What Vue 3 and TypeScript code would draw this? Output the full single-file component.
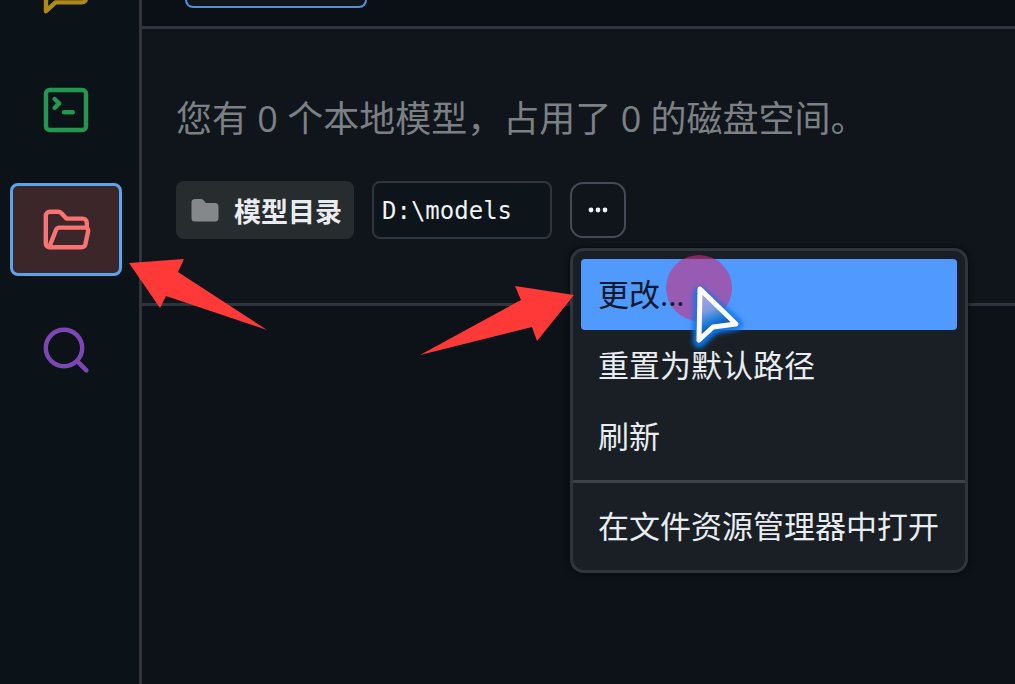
<script setup lang="ts">
import { ref } from 'vue'

const directory = ref('D:\\models')
const primary: string[] = ['更改...', '重置为默认路径', '刷新']
const highlighted = ref(0)
</script>

<template>
  <div class="app">
    <nav class="sidebar">
      <button class="side-item" type="button" aria-label="聊天">
        <svg class="side-icon" viewBox="0 0 24 24" fill="none" stroke="#b08a18">
          <path d="M22 16.200a2 2 0 0 1-2 2H6.800L2 22.600V4.500a2 2 0 0 1 2-2h16a2 2 0 0 1 2 2z" />
        </svg>
      </button>
      <button class="side-item" type="button" aria-label="终端">
        <svg class="side-icon" viewBox="0 0 24 24" fill="none" stroke="#249650">
          <rect x="2" y="2" width="20" height="20" rx="1.800" />
          <path d="M6.300 6.500l2.300 2.200-2.300 2.200M11 13.100h4.400" />
        </svg>
      </button>
      <button class="side-item active" type="button" aria-label="模型">
        <svg class="side-icon" viewBox="0 0 24 24" fill="none" stroke="#fa7373">
          <path d="M3.600 20.600A1.900 1.900 0 0 1 1.900 18.700V4.900A2 2 0 0 1 3.900 2.900h4.300a2 2 0 0 1 1.400.600l2.600 2.800h8.200a2 2 0 0 1 2 2v2.500M3.600 20.600h16.200a2 2 0 0 0 1.900-1.500l1.400-6.700a1.500 1.500 0 0 0-1.500-1.600H8.800a2 2 0 0 0-1.800 1.200L3.600 20.600z" />
        </svg>
      </button>
      <button class="side-item" type="button" aria-label="搜索">
        <svg class="side-icon" viewBox="0 0 24 24" fill="none" stroke="#7e45b4">
          <circle cx="11" cy="11" r="9.100" />
          <path d="M17.700 17.700L22.200 22.200" />
        </svg>
      </button>
    </nav>

    <main class="main">
      <header class="topbar"><div class="tab"></div></header>
      <section class="summary">
        <h1 class="title">您有 0 个本地模型，占用了 0 的磁盘空间。</h1>
        <div class="controls">
          <label class="dir-label" for="dir">
            <svg class="folder" viewBox="0 0 28 24" fill="#85888b">
              <path d="M4 1h6c1 0 1.700.300 2.300 1L15 5h9a3.500 3.500 0 0 1 3.500 3.500V20a3.500 3.500 0 0 1-3.500 3.500H4A3.500 3.500 0 0 1 .500 20V4.500A3.500 3.500 0 0 1 4 1z" />
            </svg>
            <span>模型目录</span>
          </label>
          <input id="dir" v-model="directory" class="dir-input" type="text" readonly />
          <div class="more-wrap">
            <button class="more" type="button" aria-label="更多">
              <svg class="dots" viewBox="0 0 20 6" fill="#f0f3f6">
                <circle cx="3" cy="3" r="2.400" /><circle cx="10" cy="3" r="2.400" /><circle cx="17" cy="3" r="2.400" />
              </svg>
            </button>
            <div class="menu">
              <div class="halo"></div>
              <div class="group">
                <button
                  v-for="(item, i) in primary"
                  :key="item"
                  class="menu-item"
                  :class="{ highlighted: highlighted === i }"
                  type="button"
                  @mouseenter="highlighted = i"
                ><span class="menu-text">{{ item }}</span></button>
              </div>
              <div class="group last">
                <button class="menu-item" type="button"><span class="menu-text">在文件资源管理器中打开</span></button>
              </div>
            </div>
          </div>
        </div>
      </section>
    </main>

    <svg class="arrow arrow-left" viewBox="0 0 138 72" fill="#ff3838">
      <path d="M0 4L55 0L49 13L138 71L37 37L31 49z" />
    </svg>
    <svg class="arrow arrow-right" viewBox="0 0 154 70" fill="#ff3838">
      <path d="M154 9L95 0L101 14L0 69L112 41L117 55z" />
    </svg>
    <svg class="pointer" viewBox="0 0 100 110">
      <defs>
        <linearGradient id="pointer-fill" x1="0" y1="0" x2="0.300" y2="1">
          <stop offset="0" stop-color="#b8a4dc" />
          <stop offset="0.450" stop-color="#7d9de0" />
          <stop offset="0.700" stop-color="#1677d8" />
          <stop offset="1" stop-color="#062d66" />
        </linearGradient>
        <filter id="pointer-glow" x="-40%" y="-40%" width="180%" height="180%">
          <feGaussianBlur stdDeviation="2.500" />
        </filter>
      </defs>
      <path d="M45 48L81 79L59 83L44 97z" fill="none" stroke="#0875e8" stroke-width="12" stroke-linejoin="round" filter="url(#pointer-glow)" />
      <path d="M45 44L81 79L58 82L44 95z" fill="url(#pointer-fill)" stroke="#ffffff" stroke-width="5" stroke-linejoin="round" />
    </svg>
  </div>
</template>

<style>
html, body { margin: 0; background: #0c1218; }
body { overflow: hidden; }
</style>

<style scoped>
.app {
  position: relative;
  display: flex;
  height: 100vh;
  overflow: hidden;
  background: #0c1218;
  color: #e9edf1;
  font-family: "Open Sans", "Noto Sans CJK SC", sans-serif;
}
button {
  margin: 0;
  padding: 0;
  border: 0;
  background: none;
  color: inherit;
  font: inherit;
}
.sidebar {
  display: flex;
  flex: none;
  flex-direction: column;
  gap: 27px;
  width: 112px;
  margin-top: -57px;
  padding: 0 17px 0 10px;
  border-right: 3px solid #30343f;
  background: #0c1318;
}
.side-item {
  display: flex;
  flex: none;
  align-items: center;
  justify-content: center;
  box-sizing: border-box;
  height: 93px;
  border: 3px solid transparent;
  border-radius: 8px;
}
.side-item.active {
  border-color: #5ca3ea;
  background: #3b2729;
}
.side-icon {
  width: 48px;
  height: 48px;
  overflow: visible;
  stroke-width: 2.2;
  stroke-linecap: round;
  stroke-linejoin: round;
}
.main { flex: 1; min-width: 0; }
.topbar {
  height: 26px;
  padding-left: 43px;
  border-bottom: 3px solid #30343f;
  background: #0b1017;
}
.tab {
  box-sizing: border-box;
  width: 182px;
  height: 8px;
  border: 2px solid #4f8fdc;
  border-top: 0;
  border-radius: 0 0 12px 12px;
  background: #0e171b;
}
.summary {
  padding: 64px 34px 64px;
  border-bottom: 3px solid #30343f;
  background: #0f151a;
}
.title {
  margin: 0 0 36px;
  color: #7c8084;
  font-size: 36px;
  font-weight: 400;
  line-height: 52px;
  white-space: nowrap;
}
.controls { display: flex; align-items: center; gap: 18px; }
.dir-label {
  display: flex;
  align-items: center;
  gap: 15px;
  box-sizing: border-box;
  height: 58px;
  padding: 0 12px 0 15px;
  border-radius: 8px;
  background: #272c2f;
  font-size: 27px;
  font-weight: 700;
  white-space: nowrap;
}
.folder { width: 28px; height: 24px; }
.dir-input {
  box-sizing: border-box;
  width: 180px;
  height: 58px;
  padding: 2px 8px 0;
  border: 2px solid #30343f;
  border-radius: 8px;
  outline: none;
  background: #0d141a;
  color: #f0f3f6;
  font-family: "DejaVu Sans Mono", monospace;
  font-size: 24px;
}
.more-wrap { position: relative; }
.more {
  display: flex;
  align-items: center;
  justify-content: center;
  box-sizing: border-box;
  width: 56px;
  height: 56px;
  border: 2px solid #464a57;
  border-radius: 13px;
}
.dots { width: 20px; height: 6px; }
.menu {
  position: absolute;
  top: 66px;
  left: 0;
  z-index: 2;
  box-sizing: border-box;
  width: 398px;
  border: 3px solid #30343f;
  border-radius: 14px;
  background: #191f24;
  box-shadow: 0 0 6px #06090c;
}
.halo {
  position: absolute;
  top: 4px;
  left: 93px;
  z-index: 1;
  width: 66px;
  height: 66px;
  border-radius: 50%;
  background: rgb(200 50 130 / 60%);
  pointer-events: none;
}
.group { padding: 8px; }
.group.last { border-top: 3px solid #3e4247; }
.menu-item {
  display: block;
  width: 100%;
  height: 71px;
  padding: 0 17px;
  border-radius: 4px;
  font-size: 31px;
  line-height: 71px;
  text-align: left;
  white-space: nowrap;
}
.menu-text { position: relative; z-index: 2; }
.menu-item.highlighted { background: #5099fe; color: #101a2b; }
.arrow, .pointer {
  position: absolute;
  z-index: 3;
  pointer-events: none;
}
.arrow-left { top: 259px; left: 129px; width: 138px; height: 72px; }
.arrow-right { top: 286px; left: 420px; width: 154px; height: 70px; }
.pointer { top: 245px; left: 655px; width: 100px; height: 110px; }
</style>
